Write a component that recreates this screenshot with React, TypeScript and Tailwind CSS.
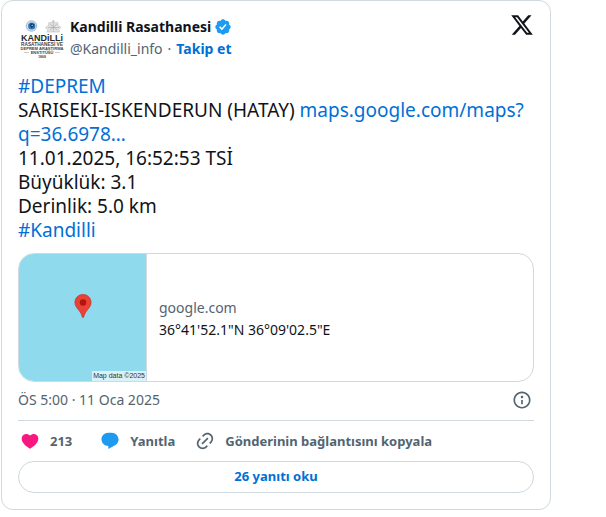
import React from "react";

const actionStyle =
  "flex items-center gap-2.5 text-[13px] font-bold leading-4 text-[#536471]";

interface IconProps {
  path: string;
  className?: string;
}

const Icon: React.FC<IconProps> = ({ path, className }) => (
  <svg viewBox="0 0 24 24" className={className} fill="currentColor" aria-hidden="true">
    <path d={path} />
  </svg>
);

const icons = {
  x: "M18.244 2.25h3.308l-7.227 8.26 8.502 11.24H16.17l-5.214-6.817L4.99 21.75H1.68l7.73-8.835L1.254 2.25H8.08l4.713 6.231zm-1.161 17.52h1.833L7.084 4.126H5.117z",
  verified:
    "M22.25 12c0-1.43-.88-2.67-2.19-3.34.46-1.39.2-2.9-.81-3.91s-2.52-1.27-3.91-.81c-.66-1.31-1.91-2.19-3.34-2.19s-2.67.88-3.33 2.19c-1.4-.46-2.91-.2-3.92.81s-1.26 2.52-.8 3.91c-1.31.67-2.2 1.91-2.2 3.34s.89 2.67 2.2 3.34c-.46 1.39-.21 2.9.8 3.91s2.52 1.26 3.91.81c.67 1.31 1.91 2.19 3.34 2.19s2.68-.88 3.34-2.19c1.39.45 2.9.2 3.91-.81s1.27-2.52.81-3.91c1.31-.67 2.19-1.91 2.19-3.34zm-11.71 4.2L6.8 12.46l1.41-1.42 2.26 2.26 4.8-5.23 1.47 1.36-6.2 6.77z",
  info: "M13.5 8.5c0 .83-.67 1.5-1.5 1.5s-1.5-.67-1.5-1.5S11.17 7 12 7s1.5.67 1.5 1.5zM13 17v-5h-2v5h2zm-1 5.25c5.66 0 10.25-4.59 10.25-10.25S17.66 1.75 12 1.75 1.75 6.34 1.75 12 6.34 22.25 12 22.25zM20.25 12c0 4.56-3.69 8.25-8.25 8.25S3.75 16.56 3.75 12 7.44 3.75 12 3.75s8.25 3.69 8.25 8.25z",
  heart:
    "M20.884 13.19c-1.351 2.48-4.001 5.12-8.379 7.67l-.503.3-.504-.3c-4.379-2.55-7.029-5.19-8.382-7.67-1.36-2.5-1.41-4.86-.514-6.67.887-1.79 2.647-2.91 4.601-3.01 1.651-.09 3.368.56 4.798 2.01 1.429-1.45 3.146-2.1 4.796-2.01 1.954.1 3.714 1.22 4.601 3.01.896 1.81.846 4.17-.514 6.67z",
  reply:
    "M1.751 10c0-4.42 3.584-8 8.005-8h4.366c4.49 0 8.129 3.64 8.129 8.13 0 2.96-1.607 5.68-4.196 7.11l-8.054 4.46v-3.69h-.067c-4.49.1-8.183-3.51-8.183-8.01z",
  link: "M18.36 5.64c-1.95-1.96-5.11-1.96-7.07 0L9.88 7.05 8.46 5.64l1.42-1.42c2.73-2.73 7.16-2.73 9.9 0 2.73 2.74 2.73 7.17 0 9.9l-1.42 1.42-1.41-1.42 1.41-1.41c1.96-1.96 1.96-5.12 0-7.07zm-2.12 3.53l-7.07 7.07-1.41-1.41 7.07-7.07 1.41 1.41zm-12.02.71l1.42-1.42 1.41 1.42-1.41 1.41c-1.96 1.96-1.96 5.12 0 7.07 1.95 1.96 5.11 1.96 7.07 0l1.41-1.41 1.42 1.41-1.42 1.42c-2.73 2.73-7.16 2.73-9.9 0-2.73-2.74-2.73-7.17 0-9.9z",
};

const Avatar = () => (
  <svg viewBox="0 0 48 48" className="size-12" fontFamily="Liberation Sans, sans-serif" textAnchor="middle">
    {/* university seal */}
    <circle cx="13.5" cy="13" r="6" fill="#dbe5ef" />
    <circle cx="13.5" cy="13" r="5" fill="none" stroke="#a9bdd2" strokeWidth="1" />
    <circle cx="13.7" cy="13" r="3.6" fill="#2b78c2" />
    <path d="M11.5 11.500l2-1.300 2.600 1-.6 2.600-2 1.200z" fill="#173a63" />
    <path d="M12 11.200l1.600 1 1.400-.8-.6 1.800z" fill="#d7e9fa" />
    {/* observatory emblem */}
    <path
      d="M35.300 7l2 3 2.500-.5.2 3 3 2-2.500 2 1 2.500H29l1-2.500-2.500-2 3-2 .3-3 2.500.5z"
      fill="#e2e2e2"
      stroke="#bcbcbc"
      strokeWidth=".6"
    />
    <path d="M35.300 8v11M30 14.500h11M32 11l7 6M39 11l-7 6" stroke="#aaa" strokeWidth=".6" />
    <g fill="#2b2b2b" fontWeight="bold">
      <text x="24" y="28" fontSize="9">KANDiLLi</text>
      <g fill="#444">
        <text x="24" y="33" fontSize="4.800">RASATHANESİ VE</text>
        <text x="24" y="37" fontSize="4.100">DEPREM ARAŞTIRMA</text>
        <text x="24" y="41" fontSize="4">ENSTİTÜSÜ</text>
        <text x="24" y="45" fontSize="3.400">1868</text>
      </g>
    </g>
    <path d="M6 39.500h5M37 39.500h5" stroke="#aaa" strokeWidth=".6" />
  </svg>
);

const MapPin = () => (
  <svg viewBox="0 0 18 25" className="h-6 w-[18px] -translate-y-3" aria-hidden="true">
    <path
      d="M9 .5C4.300.5.6 4.200.6 8.800c0 3.300 1.900 5.300 4.100 8.200 1.800 2.300 2.900 4.200 3.500 6.600.2.700.4 1 .8 1s.6-.3.8-1c.6-2.400 1.700-4.300 3.500-6.600 2.200-2.900 4.100-4.900 4.100-8.200C17.400 4.200 13.700.5 9 .5z"
      fill="#ea4335"
      stroke="#c5362b"
      strokeWidth=".8"
    />
    <circle cx="9" cy="8.900" r="3.400" fill="#b31412" />
  </svg>
);

const App = () => {
  return (
    <article
      lang="tr"
      className="ml-px max-w-[550px] rounded-xl border border-[#cfd9de] bg-white px-4 pt-3 pb-4 font-['Noto_Sans',sans-serif] text-[#0f1419]"
    >
      <header className="flex items-start justify-between">
        <div className="flex gap-1">
          <a href="#" aria-label="Kandilli Rasathanesi">
            <Avatar />
          </a>
          <div className="pt-1">
            <a href="#" className="flex items-center gap-[3px] text-sm font-bold leading-5">
              Kandilli Rasathanesi
              <Icon path={icons.verified} className="size-[18px] text-[#1d9bf0]" />
            </a>
            <div className="flex gap-[5px] text-sm leading-6 text-[#536471]">
              <a href="#">@Kandilli_info</a>
              <span>·</span>
              <a href="#" className="font-bold text-[#006fd6]">
                Takip et
              </a>
            </div>
          </div>
        </div>
        <a href="#" aria-label="X">
          <Icon path={icons.x} className="size-6" />
        </a>
      </header>

      <div className="mt-[13px] text-[19px] leading-6">
        <a href="#" className="text-[#006fd6]">#DEPREM</a>
        <br />
        SARISEKI-ISKENDERUN (HATAY){" "}
        <a href="#" className="text-[#006fd6]">
          maps.google.com/maps?
          <wbr />
          q=36.6978…
        </a>
        <br />
        11.01.2025, 16:52:53 TSİ
        <br />
        Büyüklük: 3.1
        <br />
        Derinlik: 5.0 km
        <br />
        <a href="#" className="text-[#006fd6]">#Kandilli</a>
      </div>

      <a
        href="#"
        className="mt-[11px] flex h-[129px] overflow-hidden rounded-2xl border border-[#cfd9de]"
      >
        <div className="relative flex w-32 shrink-0 items-center justify-center border-r border-[#cfd9de] bg-[#90daee]">
          <MapPin />
          <span className="absolute right-0 bottom-0 bg-[#d9f1f8] px-px font-['Liberation_Sans',sans-serif] text-[7px] leading-[10px] text-[#333]">
            Map data ©2025
          </span>
        </div>
        <div className="flex flex-col justify-center px-3 pt-0.5 text-sm leading-[22px]">
          <span className="text-[#536471]">google.com</span>
          <span>36°41'52.1"N 36°09'02.5"E</span>
        </div>
      </a>

      <div className="flex items-center justify-between border-b border-[#cfd9de] pt-2 pr-0.5 pb-2.5 text-[#536471]">
        <a href="#" className="text-sm leading-5">
          ÖS 5:00 · 11 Oca 2025
        </a>
        <a href="#" aria-label="Bilgi">
          <Icon path={icons.info} className="size-5" />
        </a>
      </div>

      <div className="flex h-10 items-center gap-5 px-0.5">
        <button type="button" className={`${actionStyle} pr-2`}>
          <Icon path={icons.heart} className="size-5 text-[#f91880]" />
          213
        </button>
        <button type="button" className={actionStyle}>
          <Icon path={icons.reply} className="size-5 text-[#1d9bf0]" />
          Yanıtla
        </button>
        <button type="button" className={actionStyle}>
          <Icon path={icons.link} className="size-5" />
          Gönderinin bağlantısını kopyala
        </button>
      </div>

      <a
        href="#"
        className="flex h-8 items-center justify-center rounded-full border border-[#cfd9de] text-[13px] font-bold text-[#006fd6]"
      >
        26 yanıtı oku
      </a>
    </article>
  );
};

export default App;
